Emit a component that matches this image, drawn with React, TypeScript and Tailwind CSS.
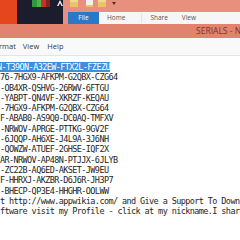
import React from "react";

const lines = [
  "76-7HGX9-AFKPM-G2QBX-CZG64",
  "-OB4XR-QSHVG-26RWV-6FTGU",
  "-YABPT-QN4VF-XKRZF-KEQAU",
  "-7HGX9-AFKPM-G2QBX-CZG64",
  "F-ABAB0-AS9Q0-DC0AQ-TMFXV",
  "-NRWOV-APRGE-PTTKG-9GV2F",
  "-6JQQP-AH6XE-J4L9A-3J6NH",
  "-QOWZW-ATUEF-2GHSE-IQF2X",
  "AR-NRWOV-AP48N-PTJJX-6JLYB",
  "-ZC22B-AQ6ED-AKSET-JW9EU",
  "F-HHRXJ-AKZBR-D6J6R-JH3P7",
  "-BHECP-QP3E4-HHGHR-OOLWW",
  "t http://www.appwikia.com/ and Give a Support To Download",
  "ftware visit my Profile - click at my nickname.I share",
];

const Folder = () => (
  <svg width="8" height="7" viewBox="0 0 8 7">
    <rect x="0" y="0" width="8" height="7" fill="#e8c46a" />
    <rect x="0" y="0" width="8" height="2" fill="#f3d98f" />
  </svg>
);

const App = () => {
  return (
    <div className="w-[240px] h-[240px] overflow-hidden bg-white font-['Open_Sans',sans-serif]">
      {/* Explorer ribbon peeking in */}
      <div className="flex h-[24px]">
        <div className="w-[17px] bg-[#e6461e]" />
        <div className="w-[46px] bg-[#1b1d2f] flex items-start">
          <div className="ml-[15px] flex h-[7px]">
            <div className="w-[5px] bg-[#2f9a3c]" />
            <div className="w-[4px] bg-[#4cb84a]" />
            <div className="w-[5px] bg-[#c8302a]" />
            <div className="w-[4px] bg-[#8a1f1c]" />
          </div>
          <svg className="ml-[7px]" width="6" height="6" viewBox="0 0 6 6">
            <path d="M0 6 L3 0 L6 6 L4.5 6 L3 3 L1.5 6 Z" fill="#f2f2f2" />
          </svg>
        </div>
        <div className="flex-1 flex flex-col">
          <div className="h-[12px] bg-[#e8907d] flex items-start">
            <div className="ml-[7px]">
              <Folder />
            </div>
            <div className="ml-[8px] w-[7px] h-[7px] bg-[#f4f1ea] flex items-end">
              <div className="w-[7px] h-[2px] bg-[#e8c46a]" />
            </div>
            <div className="ml-[5px]">
              <Folder />
            </div>
            <svg className="ml-[6px] mt-[2px]" width="4" height="3" viewBox="0 0 4 3">
              <path d="M0 0 L4 0 L2 3 Z" fill="#5a2f28" />
            </svg>
          </div>
          <div className="h-[12px] flex">
            <div className="w-[5px] bg-[#e8907d]" />
            <div className="w-[31px] bg-[#2b78c9] text-white text-[6.5px] flex items-center justify-center">
              File
            </div>
            <div className="flex-1 bg-[#f6f6f6] flex items-center text-[6.5px] text-[#555]">
              <span className="ml-[8px]">Home</span>
              <span className="ml-[16px] pl-[8px] border-l border-[#e2e2e2]">Share</span>
              <span className="ml-[14px]">View</span>
            </div>
          </div>
        </div>
      </div>

      {/* Notepad title bar */}
      <div className="h-[14px] bg-[#e2836f] flex items-center">
        <span className="ml-[196px] whitespace-nowrap text-[8.5px] text-[#7e3327]">
          SERIALS - Notepad
        </span>
      </div>

      {/* Menu bar */}
      <div className="h-[17px] bg-[#f9f9f9] flex items-center text-[7.5px] text-[#3a3a3a]">
        <span className="ml-[-1px]">rmat</span>
        <span className="ml-[7px]">View</span>
        <span className="ml-[8px]">Help</span>
      </div>
      <div className="h-[1px] bg-[#dbe8f4]" />

      {/* Text area */}
      <div className="pt-[6px] font-['DejaVu_Sans_Mono',monospace] text-[8.5px] tracking-[-0.6px] text-[#1e1e1e]">
        <div className="h-[10.3px] leading-[10.3px] whitespace-pre">
          <span className="bg-[#3e8fdd] text-white inline-block ml-[-3px]">N-T39ON-A32EW-FTX2L-FZEZU</span>
        </div>
        {lines.map((l, i) => (
          <div key={i} className="h-[10.3px] leading-[10.3px] whitespace-pre">
            {l}
          </div>
        ))}
      </div>
    </div>
  );
};

export default App;
